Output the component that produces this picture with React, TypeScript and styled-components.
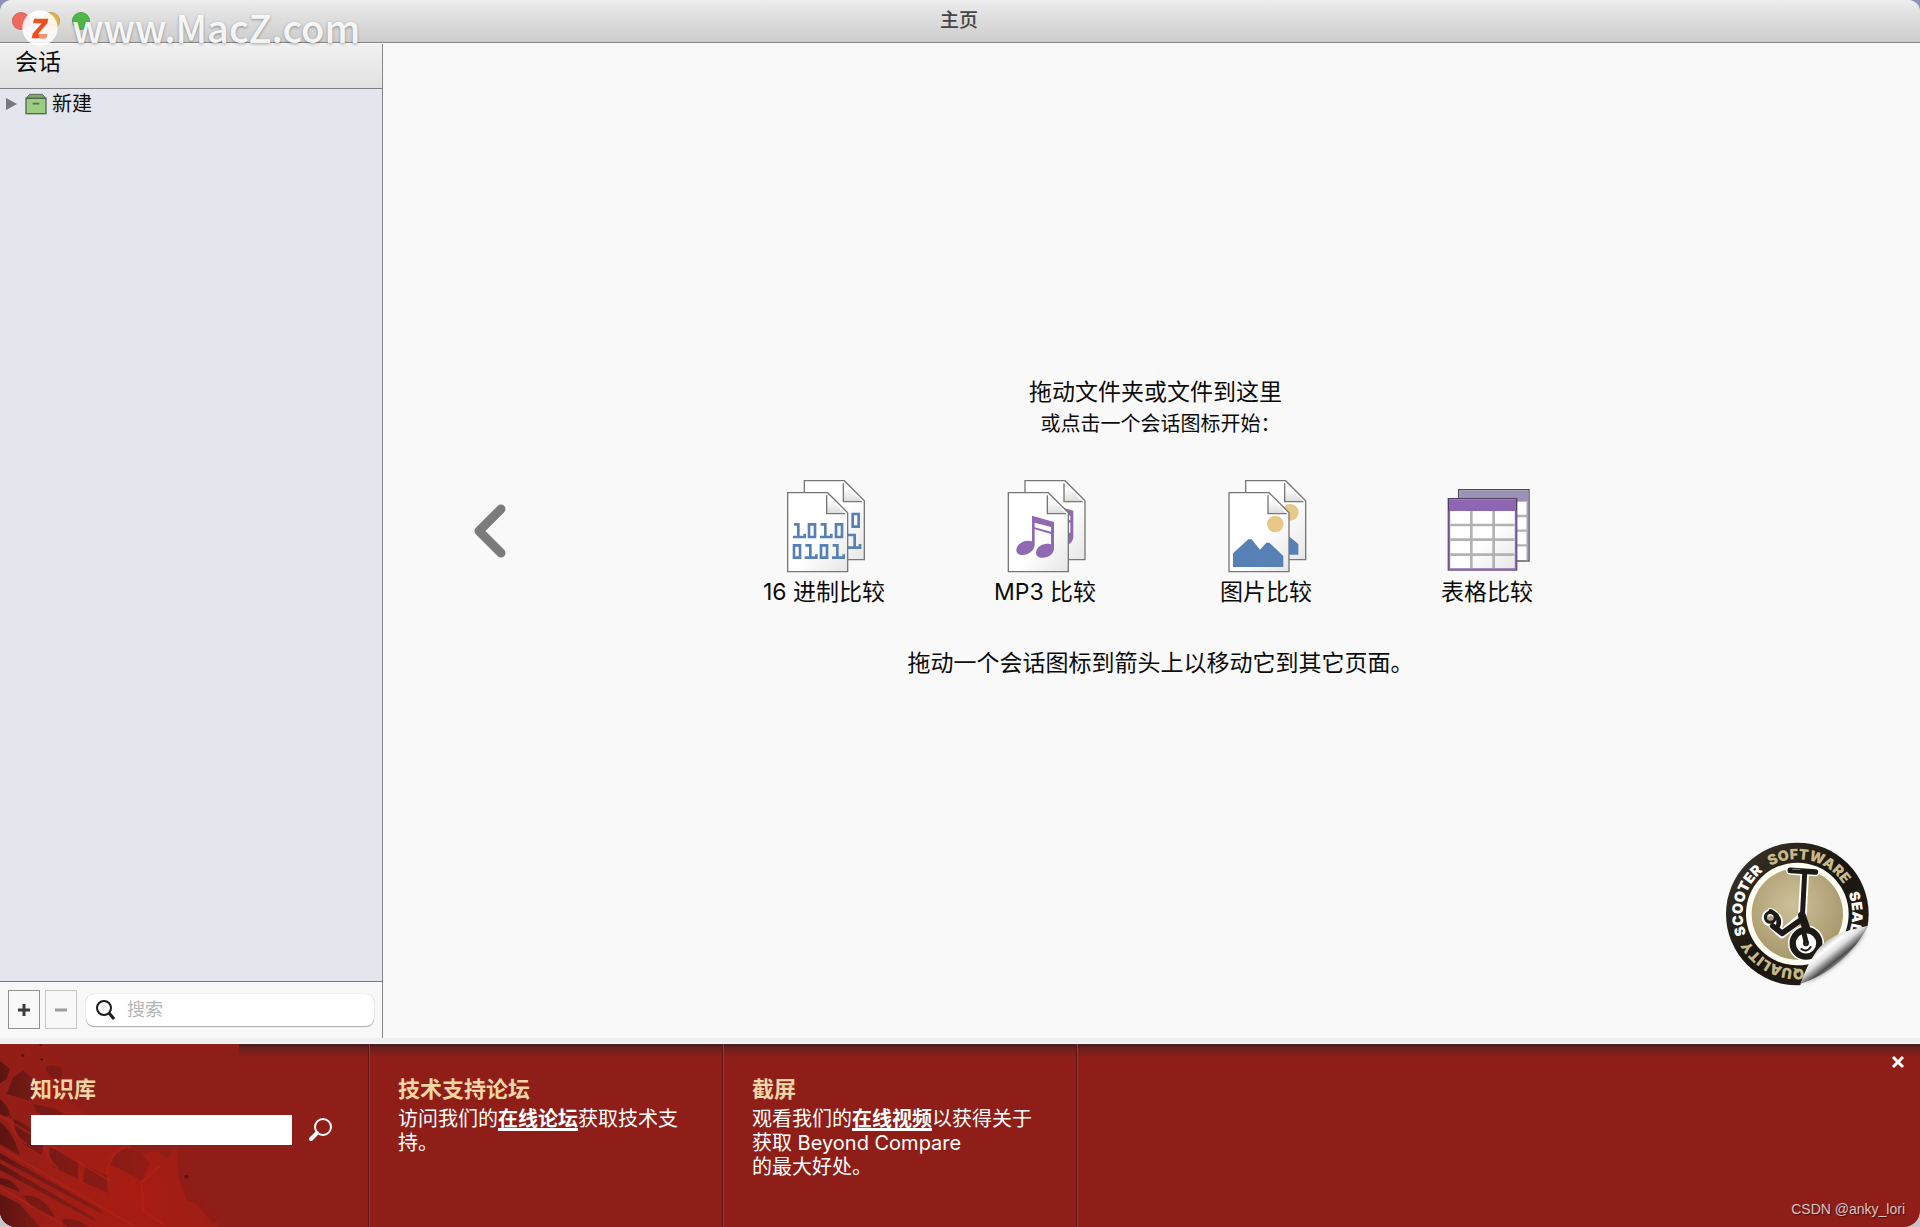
import React from "react";
import styled, { createGlobalStyle } from "styled-components";

const sans = `Inter, "Noto Sans CJK SC", sans-serif`;

const GlobalStyle = createGlobalStyle`
  *, *::before, *::after { box-sizing: border-box; }
  body { margin: 0; background: linear-gradient(#8d93b8, #c9c6cb); font-family: ${sans}; color: #0b0b0b; }
  button, input { font-family: inherit; }
  h1, h2, p { margin: 0; }
`;

const Window = styled.div`
  position: relative;
  display: flex;
  flex-direction: column;
  min-height: 100vh;
  overflow: hidden;
  border-radius: 12px 12px 16px 16px;
  background: #f9f9f9;
`;

const TitleBar = styled.header`
  display: flex;
  align-items: center;
  justify-content: center;
  height: 43px;
  padding: 0 2px 1px 0;
  border-bottom: 1px solid #858585;
  background: linear-gradient(#eeeeee, #e2e2e2 30%, #cdcdcd);
`;

const WindowTitle = styled.h1`
  font-size: 19px;
  line-height: 24px;
  font-weight: 500;
  color: #454545;
`;

const WindowButtons = styled.div`
  position: absolute;
  top: 12px;
  left: 12px;
  display: flex;
  gap: 12px;
`;

const WindowButton = styled.button<{ $color: string }>`
  width: 18px;
  height: 18px;
  padding: 0;
  border: 1px solid rgba(0, 0, 0, 0.12);
  border-radius: 50%;
  background: ${(p) => p.$color};
`;

const Watermark = styled.div`
  position: absolute;
  z-index: 2;
  top: 6px;
  left: 22px;
  display: flex;
  align-items: center;
  gap: 14px;
  height: 44px;
  font-family: "Noto Sans CJK SC", sans-serif;
  font-size: 38px;
  line-height: 40px;
  font-weight: 500;
  color: rgba(255, 255, 255, 0.92);
  text-shadow: 0 1px 3px rgba(0, 0, 0, 0.35);
  pointer-events: none;
`;

const WatermarkText = styled.span`
  padding-bottom: 3px;
`;

const Body = styled.div`
  display: flex;
  flex: 1;
  padding-top: 1px;
`;

const Sidebar = styled.aside`
  display: flex;
  flex-direction: column;
  flex-shrink: 0;
  width: 383px;
  border-right: 1px solid #858689;
  background: #e3e6ec;
`;

const SidebarHeader = styled.div`
  height: 45px;
  padding: 2px 15px;
  border-bottom: 1px solid #7e7f82;
  background: linear-gradient(#f1f1f1, #e1e1e1);
`;

const SidebarTitle = styled.h2`
  font-size: 23px;
  line-height: 32px;
  font-weight: 400;
`;

const Tree = styled.div`
  flex: 1;
`;

const TreeRow = styled.button`
  display: flex;
  align-items: center;
  width: 100%;
  height: 29px;
  padding: 0 6px;
  border: 0;
  background: none;
  font-size: 20px;
  line-height: 24px;
  color: #0b0b0b;
`;

const Disclosure = styled.svg`
  width: 12px;
  height: 12px;
  margin-right: 7px;
`;

const BoxIcon = styled.svg`
  width: 22px;
  height: 22px;
  margin-right: 5px;
`;

const SidebarTools = styled.div`
  display: flex;
  align-items: center;
  height: 57px;
  padding: 0 8px 1px 8px;
  border-top: 1px solid #77787a;
  background: #f8f8f8;
`;

const ToolButton = styled.button`
  display: grid;
  place-items: center;
  flex-shrink: 0;
  width: 32px;
  height: 39px;
  margin-right: 5px;
  padding: 0;
  border: 1px solid #909090;
  background: #f8f8f8;
  color: #3a3a3a;
  &:disabled {
    border-color: #c6c6c6;
    color: #9d9d9d;
  }
`;

const SearchField = styled.label`
  display: flex;
  flex: 1;
  align-items: center;
  gap: 12px;
  min-width: 0;
  height: 32px;
  margin-left: 4px;
  padding: 0 10px;
  border-radius: 8px;
  background: #ffffff;
  box-shadow: 0 0 1px rgba(0, 0, 0, 0.25), 0 1px 1px rgba(0, 0, 0, 0.3);
`;

const SearchInput = styled.input`
  flex: 1;
  min-width: 0;
  padding: 0;
  border: 0;
  outline: 0;
  background: none;
  font-size: 18px;
  line-height: 24px;
  &::placeholder { color: #b4b4b4; }
`;

const Main = styled.main`
  position: relative;
  display: grid;
  grid-template-columns: 1fr auto 1fr;
  align-items: center;
  flex: 1;
  padding: 0 0 28px 8px;
`;

const PageArrow = styled.button`
  justify-self: start;
  width: 40px;
  height: 60px;
  margin: 8px 0 0 79px;
  padding: 0;
  border: 0;
  background: none;
`;

const Start = styled.section`
  display: flex;
  flex-direction: column;
  align-items: center;
`;

/* $closed lines end in full-width punctuation, whose blank half is balanced on the left */
const Line = styled.p<{ $small?: boolean; $closed?: boolean }>`
  padding-left: ${(p) => (p.$closed ? 10 : 0)}px;
  font-size: ${(p) => (p.$small ? 20 : 23)}px;
  line-height: 32px;
`;

const Sessions = styled.div`
  display: flex;
  padding: 38px 0 39px;
`;

const SessionButton = styled.button`
  display: flex;
  flex-direction: column;
  align-items: center;
  width: 221px;
  padding: 0;
  border: 0;
  background: none;
  font-size: 23px;
  line-height: 32px;
  color: #0b0b0b;
`;

const SessionIcon = styled.svg`
  width: 82px;
  height: 98px;
`;

const Seal = styled.svg`
  position: absolute;
  right: 44px;
  bottom: 46px;
  width: 156px;
  height: 152px;
`;

const Splitter = styled.div`
  height: 6px;
  border-bottom: 1px solid #ffffff;
  background: #efefef;
`;

const Footer = styled.footer`
  position: relative;
  display: flex;
  height: 183px;
  background: #8f1e18;
`;

const FooterShade = styled.div`
  position: absolute;
  top: 0;
  right: 0;
  left: 239px;
  height: 14px;
  background: linear-gradient(#451c1b, #6b201d 30%, rgba(143, 30, 24, 0));
`;

const Tread = styled.svg`
  position: absolute;
  top: 0;
  left: 0;
  width: 230px;
  height: 183px;
`;

const Panel = styled.section<{ $first?: boolean }>`
  position: relative;
  width: ${(p) => (p.$first ? 370 : 354)}px;
  padding: 29px 26px 0 ${(p) => (p.$first ? 30 : 28)}px;
  border-right: 1px solid #bb2a20;
  box-shadow: inset -1px 0 #641410;
`;

const PanelTitle = styled.h2`
  font-size: 22px;
  line-height: 32px;
  font-weight: 700;
  color: #f1d5a5;
`;

const PanelText = styled.p`
  margin-top: 2px;
  font-size: 20px;
  line-height: 24px;
  color: #ffffff;
`;

const PanelLink = styled.a`
  font-weight: 700;
  color: #ffffff;
  text-decoration: underline;
  text-decoration-thickness: 3px;
  text-underline-offset: 2px;
  text-decoration-skip-ink: none;
`;

const Lookup = styled.form`
  display: flex;
  align-items: center;
  gap: 15px;
  margin-top: 10px;
  padding-left: 1px;
`;

const LookupInput = styled.input`
  width: 261px;
  height: 30px;
  padding: 0 6px;
  border: 0;
  background: #ffffff;
  font-size: 18px;
`;

const IconButton = styled.button`
  display: grid;
  place-items: center;
  width: 26px;
  height: 26px;
  padding: 0;
  border: 0;
  background: none;
`;

const CloseSlot = styled.div`
  position: absolute;
  top: 5px;
  right: 9px;
`;

const Credit = styled.div`
  position: absolute;
  right: 15px;
  bottom: 8px;
  font-family: "Liberation Sans", Arial, sans-serif;
  font-size: 14px;
  line-height: 20px;
  color: #d9c4c2;
  text-shadow: 1px 1px 1px rgba(0, 0, 0, 0.5);
`;

const SharedDefs = styled.svg`
  position: absolute;
  width: 0;
  height: 0;
`;

function Page({ x, y }: { x: number; y: number }) {
  return (
    <g transform={`translate(${x} ${y})`} stroke="#777" strokeWidth="4">
      <path d="M0 0H120L180 60V237H0Z" fill="url(#paper)" />
      <path d="M117 8V63H173" fill="url(#fold)" />
    </g>
  );
}

function PaperDefs() {
  return (
    <SharedDefs aria-hidden="true">
      <defs>
        <linearGradient id="paper" x1="0" y1="0" x2="1" y2="1">
          <stop offset="0.55" stopColor="#fff" />
          <stop offset="1" stopColor="#e6e6e6" />
        </linearGradient>
        <linearGradient id="fold" x1="0.5" y1="0" x2="0.5" y2="1">
          <stop offset="0.3" stopColor="#fff" />
          <stop offset="1" stopColor="#dcdcdc" />
        </linearGradient>
      </defs>
    </SharedDefs>
  );
}

function HexIcon() {
  return (
    <SessionIcon viewBox="69 54 246 294">
      <Page x={133} y={62} />
      <path d="M278 162H296V200H278Z" fill="none" stroke="#5680b6" strokeWidth="8" />
      <path d="M264 225H284V263M264 263H300V252" fill="none" stroke="#5680b6" strokeWidth="8" />
      <Page x={83} y={98} />
      <g fill="none" stroke="#5680b6" strokeWidth="8">
        <path d="M102 193H115V231M99 231H134V221" />
        <path d="M147 193H165V231H147Z" />
        <path d="M182 193H196V231M180 231H214V221" />
        <path d="M228 193H246V231H228Z" />
        <path d="M102 256H120V293H102Z" />
        <path d="M136 256H151V293M134 293H169V283" />
        <path d="M183 256H201V293H183Z" />
        <path d="M218 256H232V293M216 293H251V283" />
      </g>
    </SessionIcon>
  );
}

const notePath =
  "M816 167L882 186V266C880 282 866 293 848 293C836 293 828 288 828 278C828 264 844 251 862 251C867 251 871 252 873 253V222L824 208V256C822 272 806 285 788 285C776 285 769 279 769 270C769 256 785 242 804 242C809 242 813 243 816 244ZM824 188V202L873 215V201Z";

function MusicIcon() {
  return (
    <SessionIcon viewBox="732 54 246 294">
      <Page x={795} y={62} />
      <path d={notePath} transform="translate(58 -34)" fill="#8f69b2" fillRule="evenodd" />
      <Page x={745} y={98} />
      <path d={notePath} fill="#8f69b2" fillRule="evenodd" />
    </SessionIcon>
  );
}

function PictureIcon() {
  return (
    <SessionIcon viewBox="75 54 246 294">
      <Page x={137} y={62} />
      <circle cx="271" cy="157" r="25" fill="#e8c888" />
      <path d="M250 215L295 252V284H250Z" fill="#5680b6" />
      <Page x={87} y={98} />
      <circle cx="226" cy="192" r="25" fill="#e8c888" />
      <path d="M99 280L145 238H155L180 269L199 248H208L250 288V321H99Z" fill="#5680b6" />
    </SessionIcon>
  );
}

function TableIcon() {
  return (
    <SessionIcon viewBox="738 54 246 294" overflow="visible">
      <g>
        <rect x="776" y="89" width="211" height="214" fill="#fff" stroke="#4d4955" strokeWidth="4" />
        <rect x="778" y="91" width="207" height="34" fill="#9d92b5" />
        <path d="M951 168H981M951 212H981M951 256H981" stroke="#b4b4b4" strokeWidth="7" />
        <path d="M982 125V301" stroke="#a8a5b0" strokeWidth="5" />
      </g>
      <rect x="745" y="116" width="205" height="214" fill="url(#paper)" stroke="#50405f" strokeWidth="4" />
      <path d="M748 152V327H947V152" fill="none" stroke="#8e6ab2" strokeWidth="5" />
      <rect x="747" y="118" width="201" height="35" fill="#8f66b3" />
      <path d="M751 195H944M751 239H944M751 284H944M814 153V324M881 153V324" stroke="#b2b2b2" strokeWidth="8" />
    </SessionIcon>
  );
}

function Scooter() {
  return (
    <g strokeLinecap="round" strokeLinejoin="round" fill="none">
      <g stroke="#fff">
        <path d="M273 149L348 154" strokeWidth="26" />
        <path d="M316 158L309 288L248 340L222 316" strokeWidth="26" />
        <circle cx="214" cy="291" r="20" strokeWidth="14" />
        <path d="M214 272Q250 292 238 318" strokeWidth="20" />
        <circle cx="320" cy="368" r="50" strokeWidth="8" />
      </g>
      <g stroke="#1d1915">
        <path d="M273 149L348 154" strokeWidth="17" />
        <path d="M316 158L309 290" strokeWidth="15" />
        <path d="M302 300L248 338L220 316" strokeWidth="17" />
        <path d="M308 285L328 345" strokeWidth="24" />
        <circle cx="213" cy="290" r="15" strokeWidth="9" fill="#aaa18a" />
        <path d="M214 272Q246 290 236 316" strokeWidth="14" />
        <circle cx="320" cy="368" r="40" strokeWidth="19" fill="#fff" />
        <path d="M313 335L320 362" strokeWidth="15" />
        <circle cx="320" cy="368" r="6" strokeWidth="6" />
        <path d="M306 385Q322 397 334 379" strokeWidth="6" />
      </g>
      <path d="M280 146H302" stroke="#85816f" strokeWidth="3" />
      <path d="M208 286Q214 278 220 286" stroke="#fff" strokeWidth="4" />
    </g>
  );
}

function QualitySeal() {
  return (
    <Seal viewBox="62 58 468 456" role="img" aria-label="Scooter Software Seal of Quality">
      <defs>
        <clipPath id="sticker">
          <path d="M60 50H530V285L507 316C440 330 380 350 345 405C322 440 312 470 300 500H60Z" />
        </clipPath>
        <radialGradient id="gold" cx="0.45" cy="0.4" r="0.65">
          <stop offset="0" stopColor="#cdc09b" />
          <stop offset="1" stopColor="#a69668" />
        </radialGradient>
        <linearGradient id="rim" x1="0" y1="0" x2="1" y2="1">
          <stop offset="0" stopColor="#41392c" />
          <stop offset="0.5" stopColor="#18140f" />
          <stop offset="1" stopColor="#2a241b" />
        </linearGradient>
        <linearGradient id="curl" gradientUnits="userSpaceOnUse" x1="375" y1="365" x2="422" y2="424">
          <stop offset="0" stopColor="#b9b9b9" />
          <stop offset="0.25" stopColor="#ffffff" />
          <stop offset="0.5" stopColor="#dddddd" />
          <stop offset="0.85" stopColor="#4c4c4c" />
          <stop offset="1" stopColor="#8c8c8c" />
        </linearGradient>
        <filter id="soft" x="-20%" y="-20%" width="140%" height="140%">
          <feGaussianBlur stdDeviation="6" />
        </filter>
        <path id="ring" d="M442 208A164 164 0 0 1 146 352A164 164 0 0 1 442 208" />
      </defs>
      <path d="M500 330Q430 440 315 486L400 410Z" fill="#777" filter="url(#soft)" />
      <g clipPath="url(#sticker)">
        <circle cx="294" cy="280" r="214" fill="url(#rim)" />
        <circle cx="294" cy="280" r="154" fill="#fffdf2" />
        <circle cx="294" cy="280" r="137" fill="url(#gold)" />
        <g fontFamily="Inter, sans-serif" fontWeight="900" fontSize="43" textAnchor="middle">
          <text fill="#ffffff"><textPath href="#ring" startOffset="68">SEAL</textPath></text>
          <text fill="#c9b987"><textPath href="#ring" startOffset="412">QUALITY</textPath></text>
          <text fill="#ffffff"><textPath href="#ring" startOffset="634">SCOOTER</textPath></text>
          <text fill="#c9b987"><textPath href="#ring" startOffset="890">SOFTWARE</textPath></text>
        </g>
        <Scooter />
      </g>
      <path d="M507 316C440 328 385 345 350 394C325 430 315 460 303 490C390 460 460 400 507 316Z" fill="url(#curl)" />
    </Seal>
  );
}

function TreadArt() {
  return (
    <Tread viewBox="0 0 690 549" aria-hidden="true">
      <defs>
        <radialGradient id="dirt" gradientUnits="userSpaceOnUse" cx="400" cy="460" r="420">
          <stop offset="0" stopColor="#a91c12" />
          <stop offset="0.6" stopColor="#9d1e16" />
          <stop offset="1" stopColor="#931e18" />
        </radialGradient>
        <linearGradient id="hollow" gradientUnits="userSpaceOnUse" x1="0" y1="0" x2="420" y2="0">
          <stop offset="0" stopColor="#5c1411" />
          <stop offset="0.2" stopColor="#751914" />
          <stop offset="1" stopColor="#901c15" />
        </linearGradient>
      </defs>
      <path d="M0 0H130L150 20L190 60L195 90L180 120L200 170L240 195L260 215L330 300L380 300L420 330L470 320L500 345L530 310L555 350L548 400L570 460L600 465L655 530V549H0Z" fill="url(#dirt)" />
      <g fill="url(#hollow)">
        <path d="M0 50L30 75L20 105L0 118Z" />
        <path d="M40 100L70 80L110 110L120 150L90 170L20 150Z" />
        <path d="M135 70Q160 55 185 75Q195 95 175 108Q145 105 135 70Z" />
        <path d="M100 180L170 195L240 250L210 255L110 205Z" />
        <path d="M0 165L20 185L35 225L0 210Z" />
        <path d="M40 225Q90 240 130 300L125 332L70 300Q45 270 40 225Z" />
        <path d="M150 310Q210 330 240 360L235 405L160 370Q145 340 150 310Z" />
        <path d="M255 362L320 395L325 448L250 415Z" />
        <path d="M335 345Q375 290 425 330L450 360L425 410L330 360Z" />
        <path d="M0 235Q35 255 60 335L0 300Z" />
        <path d="M0 328L300 495L310 512L0 345Z" />
        <path d="M0 358L280 520L290 535L0 378Z" />
        <path d="M0 402Q45 405 60 445L0 420Z" />
        <path d="M70 455Q130 450 165 520Q100 505 70 455Z" />
        <path d="M0 450L60 480L120 549H0Z" />
        <path d="M185 525Q230 520 270 549H190Z" />
        <path d="M530 310L555 350L548 400L570 460L600 465L655 530L640 540L590 482L560 468L535 400Z" />
      </g>
      <g fill="none" stroke="#b1231a" strokeWidth="7" opacity="0.6">
        <path d="M0 215L330 410M0 312L400 545M0 430L200 549" />
        <path d="M25 215Q40 280 80 300M130 290Q135 340 175 375M240 350Q230 390 250 425M322 390Q330 320 385 305M425 415L480 365M425 415L430 500L500 549" />
      </g>
      <g fill="#5a1512">
        <circle cx="68" cy="34" r="5" />
        <circle cx="125" cy="46" r="4" />
        <circle cx="122" cy="3" r="4" />
        <circle cx="559" cy="398" r="6" />
      </g>
    </Tread>
  );
}

const sessions = [
  { label: "16 进制比较", Icon: HexIcon },
  { label: "MP3 比较", Icon: MusicIcon },
  { label: "图片比较", Icon: PictureIcon },
  { label: "表格比较", Icon: TableIcon },
];

export default function App() {
  return (
    <>
      <GlobalStyle />
      <Window lang="zh-CN">
        <PaperDefs />
        <TitleBar>
          <WindowTitle>主页</WindowTitle>
          <WindowButtons>
            <WindowButton $color="#ee6a5f" aria-label="关闭" />
            <WindowButton $color="#e5b04a" aria-label="最小化" />
            <WindowButton $color="#4fb848" aria-label="缩放" />
          </WindowButtons>
        </TitleBar>
        <Watermark>
          <svg width="36" height="36" viewBox="0 0 108 108" aria-hidden="true">
            <circle cx="54" cy="54" r="53" fill="#fff" fillOpacity="0.88" />
            <path d="M36 26H79L76 40L48 72H76L72 85H29L32 71L59 40H33Z" fill="#f04e1e" />
            <path d="M48 72H76L72 85H52Z" fill="#f6916f" />
          </svg>
          <WatermarkText>www.MacZ.com</WatermarkText>
        </Watermark>
        <Body>
          <Sidebar>
            <SidebarHeader>
              <SidebarTitle>会话</SidebarTitle>
            </SidebarHeader>
            <Tree>
              <TreeRow>
                <Disclosure viewBox="0 0 12 12">
                  <path d="M0 0L11 6L0 12Z" fill="#77797c" />
                </Disclosure>
                <BoxIcon viewBox="0 0 66 66">
                  <path d="M3 16L14 4H52L63 16Z" fill="#7aa96a" stroke="#5d6a58" strokeWidth="3" />
                  <rect x="3" y="16" width="60" height="46" fill="#9ccc82" stroke="#566551" strokeWidth="4" />
                  <path d="M23 32H43" stroke="#4f7045" strokeWidth="5" />
                </BoxIcon>
                新建
              </TreeRow>
            </Tree>
            <SidebarTools>
              <ToolButton aria-label="添加">
                <svg width="14" height="14" viewBox="0 0 14 14">
                  <path d="M7 1V13M1 7H13" stroke="currentColor" strokeWidth="3" />
                </svg>
              </ToolButton>
              <ToolButton aria-label="删除" disabled>
                <svg width="14" height="14" viewBox="0 0 14 14">
                  <path d="M1 7H13" stroke="currentColor" strokeWidth="3" />
                </svg>
              </ToolButton>
              <SearchField>
                <svg width="19" height="20" viewBox="0 0 19 20" fill="none" stroke="#1c1c1c" strokeWidth="2" aria-hidden="true">
                  <circle cx="8" cy="8" r="7" />
                  <path d="M13 13L18 19" strokeWidth="3" />
                </svg>
                <SearchInput type="search" placeholder="搜索" aria-label="搜索" />
              </SearchField>
            </SidebarTools>
          </Sidebar>
          <Main>
            <PageArrow aria-label="上一页">
              <svg width="40" height="60" viewBox="0 0 40 60" aria-hidden="true">
                <path d="M31 8L9 30L31 52" fill="none" stroke="#7b7b7b" strokeWidth="9" strokeLinejoin="round" strokeLinecap="round" />
              </svg>
            </PageArrow>
            <Start>
              <Line>拖动文件夹或文件到这里</Line>
              <Line $small $closed>或点击一个会话图标开始：</Line>
              <Sessions>
                {sessions.map(({ label, Icon }) => (
                  <SessionButton key={label}>
                    <Icon />
                    {label}
                  </SessionButton>
                ))}
              </Sessions>
              <Line $closed>拖动一个会话图标到箭头上以移动它到其它页面。</Line>
            </Start>
            <QualitySeal />
          </Main>
        </Body>
        <Splitter />
        <Footer>
          <TreadArt />
          <FooterShade />
          <Panel $first>
            <PanelTitle>知识库</PanelTitle>
            <Lookup onSubmit={(e) => e.preventDefault()}>
              <LookupInput type="text" aria-label="搜索知识库" />
              <IconButton type="submit" aria-label="搜索">
                <svg width="24" height="24" viewBox="0 0 24 24" fill="none" stroke="#fff" strokeLinecap="round">
                  <circle cx="15" cy="9" r="8" strokeWidth="2" />
                  <path d="M9 15L3 21" strokeWidth="4" />
                </svg>
              </IconButton>
            </Lookup>
          </Panel>
          <Panel>
            <PanelTitle>技术支持论坛</PanelTitle>
            <PanelText>
              访问我们的<PanelLink href="#forum">在线论坛</PanelLink>获取技术支
              <br />
              持。
            </PanelText>
          </Panel>
          <Panel>
            <PanelTitle>截屏</PanelTitle>
            <PanelText>
              观看我们的<PanelLink href="#video">在线视频</PanelLink>以获得关于
              <br />
              获取 Beyond Compare
              <br />
              的最大好处。
            </PanelText>
          </Panel>
          <CloseSlot>
            <IconButton aria-label="关闭">
              <svg width="14" height="14" viewBox="0 0 14 14">
                <path d="M2 2L12 12M12 2L2 12" stroke="#fff" strokeWidth="3" />
              </svg>
            </IconButton>
          </CloseSlot>
          <Credit>CSDN @anky_lori</Credit>
        </Footer>
      </Window>
    </>
  );
}
